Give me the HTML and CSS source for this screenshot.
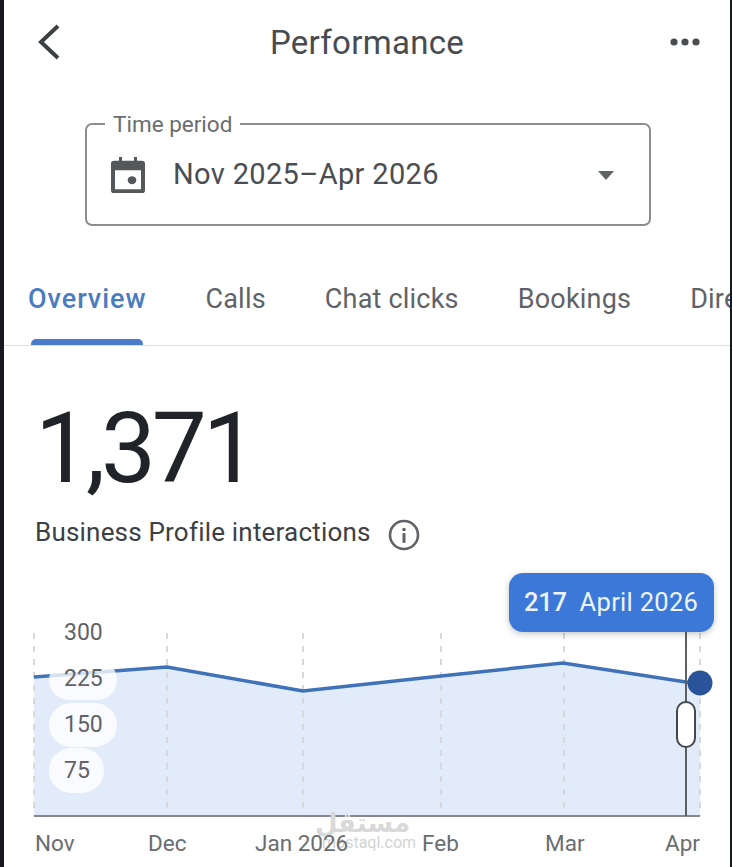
FILE: index.html
```html
<!DOCTYPE html>
<html lang="en">
<head>
<meta charset="utf-8">
<title>Performance</title>
<link rel="stylesheet" href="styles.css">
</head>
<body>
<main class="screen">
  <header class="topbar">
    <svg class="back" viewBox="0 0 24 38" aria-hidden="true"><path d="M21 3 L4 19 L21 35"/></svg>
    <h1 class="title">Performance</h1>
    <svg class="more" viewBox="0 0 30 8" aria-hidden="true"><circle cx="4" cy="4" r="3.6"/><circle cx="15" cy="4" r="3.6"/><circle cx="26" cy="4" r="3.6"/></svg>
  </header>

  <fieldset class="period">
    <legend class="period-label">Time period</legend>
    <div class="period-row">
      <svg class="cal" viewBox="0 0 34 38" preserveAspectRatio="none" aria-hidden="true"><path fill-rule="evenodd" d="M8 0h3v4h12V0h3v4h5a3 3 0 0 1 3 3v28a3 3 0 0 1-3 3H3a3 3 0 0 1-3-3V7a3 3 0 0 1 3-3h5zM4 14v20h26V14z"/><circle cx="21" cy="24.500" r="4.300"/></svg>
      <span class="period-value">Nov 2025–Apr 2026</span>
      <span class="caret"></span>
    </div>
  </fieldset>

  <nav class="tabs">
    <a class="tab active">Overview</a>
    <a class="tab">Calls</a>
    <a class="tab">Chat clicks</a>
    <a class="tab">Bookings</a>
    <a class="tab">Directions</a>
  </nav>

  <section class="summary">
    <div class="total">1,371</div>
    <div class="caption">
      <span>Business Profile interactions</span>
      <svg class="info" viewBox="0 0 32 32" aria-hidden="true"><circle class="info-ring" cx="16" cy="16" r="14"/><circle class="info-dot" cx="16" cy="10.500" r="1.800"/><rect class="info-dot" x="14.500" y="14" width="3" height="10" rx="1"/></svg>
    </div>
  </section>

  <section class="chart">
    <svg class="plot" viewBox="0 0 728 297">
      <path class="area" d="M30 107 L163 97 L299 121 L437 106 L559 93 L682 112 L696 113 V246 H30 Z"/>
      <g class="grid">
        <line x1="30" y1="63" x2="30" y2="246"/>
        <line x1="163" y1="63" x2="163" y2="246"/>
        <line x1="299" y1="63" x2="299" y2="246"/>
        <line x1="437" y1="63" x2="437" y2="246"/>
        <line x1="560" y1="63" x2="560" y2="246"/>
        <line x1="696" y1="63" x2="696" y2="246"/>
      </g>
      <path class="line" d="M30 107 L163 97 L299 121 L437 106 L559 93 L682 112 L696 113"/>
      <line class="baseline" x1="30" y1="246" x2="696" y2="246"/>
      <rect class="pill" x="45" y="90" width="68" height="40" rx="20"/>
      <rect class="pill" x="45" y="133" width="68" height="44" rx="22"/>
      <rect class="pill" x="45" y="178" width="55" height="45" rx="22"/>
      <g class="y-labels">
        <text x="60" y="70">300</text>
        <text x="60" y="116">225</text>
        <text x="60" y="162">150</text>
        <text x="60" y="208">75</text>
      </g>
      <line class="cursor" x1="682" y1="60" x2="682" y2="246"/>
      <rect class="handle" x="673" y="132" width="18" height="45" rx="9"/>
      <circle class="dot" cx="696" cy="113" r="12.500"/>
      <g class="mark">
        <text class="mark-ar" x="406" y="262" direction="rtl">مستقل</text>
        <text class="mark-en" x="318" y="278">mostaql.com</text>
      </g>
      <g class="x-labels">
        <text x="31" y="281">Nov</text>
        <text x="144" y="281">Dec</text>
        <text x="251" y="281">Jan 2026</text>
        <text x="418" y="281">Feb</text>
        <text x="541" y="281">Mar</text>
        <text x="661" y="281">Apr</text>
      </g>
    </svg>
    <div class="tooltip"><strong>217</strong><span>April 2026</span></div>
  </section>
</main>
</body>
</html>
```
FILE: styles.css
```css
* { box-sizing: border-box; }
html, body { margin: 0; height: 100%; }
body { background: #15191e; overflow: hidden; }
.screen {
  width: 726px; height: 867px; margin-left: 4px;
  background: #fff; color: #5f6368; overflow: hidden;
  font-family: Roboto, "Liberation Sans", sans-serif;
  display: flex; flex-direction: column;
}
.topbar {
  height: 84px; flex: none; display: flex; align-items: center;
  justify-content: space-between; padding: 0 30px 0 33px; position: relative;
}
.back { width: 24px; height: 38px; fill: none; stroke: #3c4043; stroke-width: 4; }
.title {
  margin: 0; font-size: 33px; font-weight: 400; color: #484c50;
  letter-spacing: .3px; position: absolute; left: 0; right: 0; text-align: center;
}
.more { width: 30px; height: 8px; fill: #4a4d50; }
.period {
  margin: 27px 0 0 81px; padding: 0 27px 0 25px; width: 566px; height: 115px; flex: none;
  border: 2px solid #8b8d8f; border-radius: 7px; min-width: 0;
}
.period-label { padding: 0 8px; margin-left: -7px; font-size: 22.500px; line-height: 26px; color: #6a6d70; }
.period-row { display: flex; align-items: center; height: 74px; margin-top: 0; }
.cal { width: 34px; height: 36px; fill: #55585b; flex: none; margin-left: -1px; margin-top: 1px; }
.period-value { margin-left: 28px; font-size: 29px; color: #4a4e52; letter-spacing: .35px; }
.caret {
  margin-left: auto; width: 0; height: 0; margin-right: 8px; margin-top: 2px;
  border-left: 8.500px solid transparent; border-right: 8.500px solid transparent; border-top: 9px solid #5f6265;
}
.tabs {
  margin-top: 45px; height: 75px; flex: none; display: flex; gap: 59px; padding-left: 24px;
  border-bottom: 1px solid #dcdddf; white-space: nowrap; overflow: hidden;
}
.tab { font-size: 27px; line-height: 56px; height: 75px; color: #5f6368; letter-spacing: .2px; position: relative; }
.tab.active { color: #4a7cc0; font-weight: 500; letter-spacing: .95px; }
.tab.active::after {
  content: ""; position: absolute; left: 3px; right: 3px; bottom: 0; height: 7px;
  background: #4a7ccb; border-radius: 5px 5px 0 0;
}
.summary { padding: 0 0 0 31px; flex: none; }
.total { margin-top: 44px; font-size: 98px; line-height: 118px; color: #202328; letter-spacing: -4.200px; }
.caption { margin-top: 5px; display: flex; align-items: center; gap: 17px; font-size: 26px; letter-spacing: .2px; color: #3c4043; line-height: 34px; }
.info { width: 32px; height: 32px; margin-top: 6px; }
.info-ring { fill: none; stroke: #5f6368; stroke-width: 2.600; }
.info-dot { fill: #5f6368; }
.chart { position: relative; flex: 1; margin-top: 19px; }
.plot { display: block; width: 728px; height: 297px; font-family: Roboto, "Liberation Sans", sans-serif; }
.area { fill: #e2ebfa; }
.grid line { stroke: #d6d8db; stroke-width: 2; stroke-dasharray: 6 7; }
.line { fill: none; stroke: #3f72b8; stroke-width: 3.500; }
.baseline { stroke: #85888c; stroke-width: 2; }
.pill { fill: rgba(255, 255, 255, .78); }
.y-labels text { font-size: 23px; fill: #5f6368; }
.x-labels text { font-size: 22.500px; fill: #6a6d70; }
.cursor { stroke: #5d6063; stroke-width: 2; }
.handle { fill: #fff; stroke: #45484b; stroke-width: 2; }
.dot { fill: #2a5499; }
.mark-ar { font-family: "DejaVu Sans", sans-serif; font-size: 26px; font-weight: 700; fill: #d9d9d9; }
.mark-en { font-size: 16px; fill: #d4d4d4; }
.tooltip {
  position: absolute; left: 505px; top: 3px; width: 205px; height: 59px;
  background: #3b78d8; border-radius: 14px; color: #eef4fd;
  box-shadow: 0 2px 6px rgba(60, 64, 67, .3);
  display: flex; align-items: center; gap: 13px; padding: 0 0 2px 15px; font-size: 25.500px; letter-spacing: .3px;
}
.tooltip strong { font-size: 25.500px; font-weight: 500; letter-spacing: -.3px; }
```
